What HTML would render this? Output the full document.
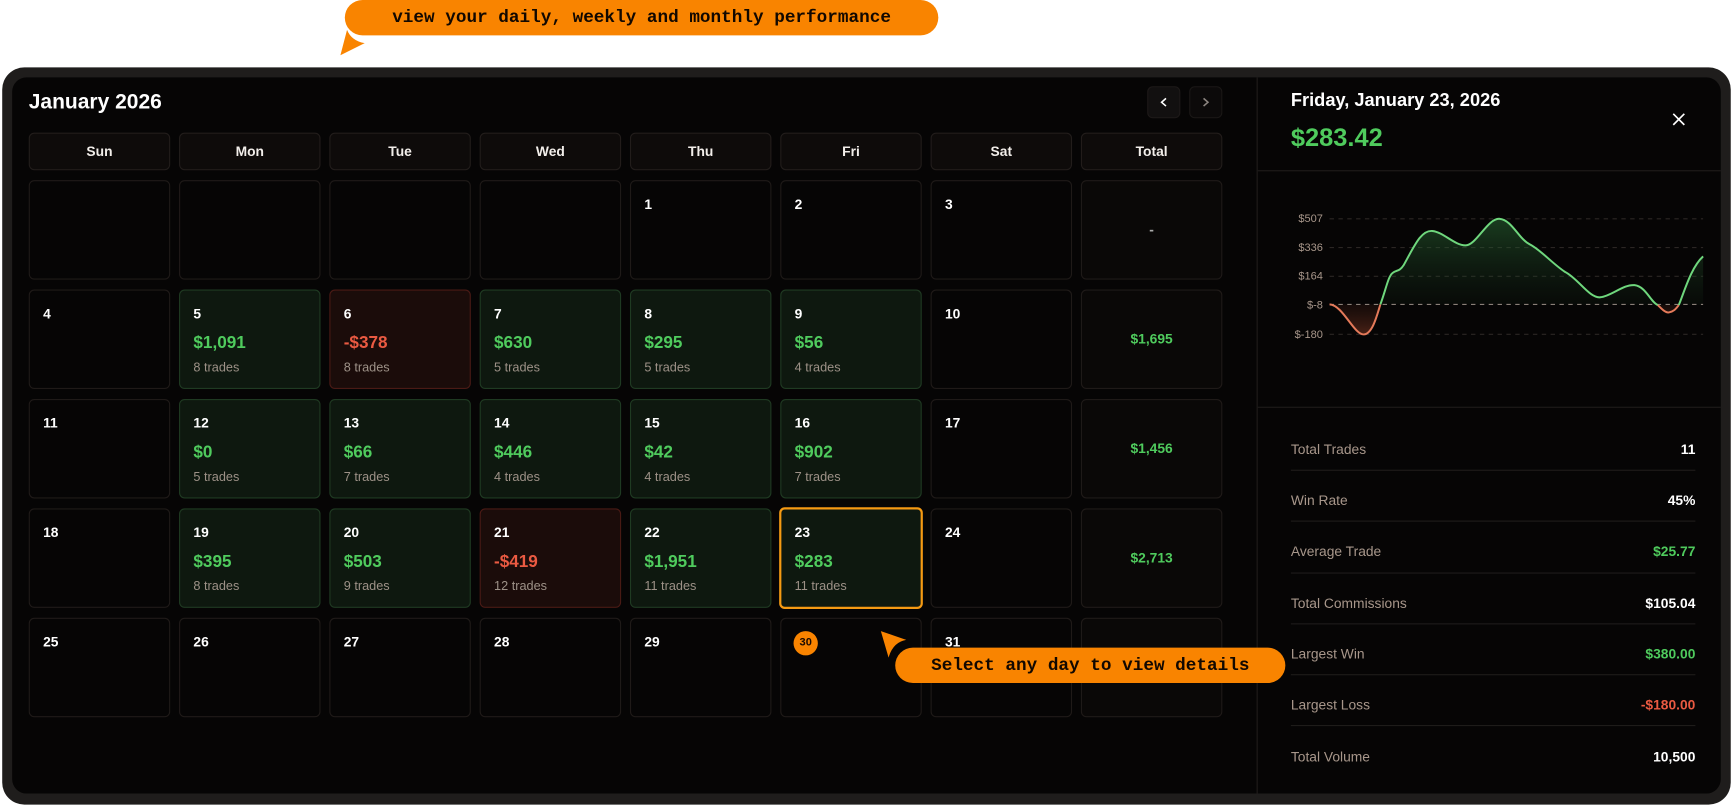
<!DOCTYPE html>
<html><head><meta charset="utf-8"><style>
*{margin:0;padding:0;box-sizing:border-box}
html,body{width:1733px;height:807px;overflow:hidden;background:#fff;font-family:"Liberation Sans",sans-serif}
#w{position:absolute;left:0;top:0;width:1568px;height:730px;transform:scale(1.1052);transform-origin:0 0}
.a{position:absolute}
.frame{left:2px;top:61px;width:1564px;height:667px;background:#1f1d1c;border-radius:20px}
.inner{left:11px;top:70px;width:1546px;height:648px;background:#060505;border-radius:13px;overflow:hidden}
.h{position:absolute;top:120px;width:128px;height:34px;background:#0e0b0a;border:1px solid #221d1b;border-radius:5px;color:#f2eeea;font-weight:bold;font-size:12.5px;text-align:center;line-height:32px}
.c{position:absolute;width:128px;height:90px;background:#060505;border:1px solid #1f1a18;border-radius:5px;color:#fff}
.c.g{background:#0e180f;border-color:#1f3a22}
.c.r{background:#1b0c0a;border-color:#4a1a15}
.c.sel{border:2px solid #f59a13;background:#0e180f}
.n{position:absolute;left:12px;top:14px;font-size:12.5px;font-weight:bold}
.m{position:absolute;left:12px;top:39px;font-size:15.5px;font-weight:bold;color:#4fcb5d}
.r .m{color:#ea5a42}
.t{position:absolute;left:12px;top:64px;font-size:11.5px;color:#9d9187}
.tot{text-align:center;line-height:88px;font-size:12.5px;font-weight:bold;color:#4fcb5d}
.lab{position:absolute;left:1168px;font-size:12.5px;color:#a8978b}
.val{position:absolute;right:34px;font-size:12.5px;font-weight:bold;color:#fff;text-align:right}
.ln{position:absolute;left:1168px;width:366px;height:1px;background:#1f1c1b}
.pill{background:#f98400;color:#120800;font-family:"Liberation Mono",monospace;font-weight:bold;border-radius:16px;text-align:center}
</style></head><body><div id="w">
<div class="a pill" style="left:312px;top:0;width:537px;height:32px;line-height:32px;font-size:16px">view your daily, weekly and monthly performance</div>
<svg class="a" style="left:300px;top:25px" width="40" height="30"><path d="M14 2 L8 25 L30 14 Q18 12 14 2Z" fill="#f98400"/></svg>
<div class="a frame"></div>
<div class="a inner"></div>
<div class="a" style="left:26px;top:82px;color:#fff;font-size:19px;font-weight:bold">January 2026</div>
<div class="a" style="left:1038px;top:78px;width:30px;height:29px;background:#121010;border:1px solid #1d1918;border-radius:5px"><svg width="28" height="27"><path d="M16 10 L12 13.5 L16 17" fill="none" stroke="#fff" stroke-width="1.4"/></svg></div>
<div class="a" style="left:1076px;top:78px;width:30px;height:29px;background:#0c0a0a;border:1px solid #1a1716;border-radius:5px"><svg width="28" height="27"><path d="M12 10 L16 13.5 L12 17" fill="none" stroke="#8c8580" stroke-width="1.4"/></svg></div>
<div class="h" style="left:26px">Sun</div><div class="h" style="left:162px">Mon</div><div class="h" style="left:298px">Tue</div><div class="h" style="left:434px">Wed</div><div class="h" style="left:570px">Thu</div><div class="h" style="left:706px">Fri</div><div class="h" style="left:842px">Sat</div><div class="h" style="left:978px">Total</div>

<div class="c" style="left:26px;top:163px"></div><div class="c" style="left:162px;top:163px"></div><div class="c" style="left:298px;top:163px"></div><div class="c" style="left:434px;top:163px"></div>
<div class="c" style="left:570px;top:163px"><span class="n">1</span></div>
<div class="c" style="left:706px;top:163px"><span class="n">2</span></div>
<div class="c" style="left:842px;top:163px"><span class="n">3</span></div>
<div class="c tot" style="left:978px;top:163px;background:#0a0807;color:#aaa">-</div>

<div class="c" style="left:26px;top:262px"><span class="n">4</span></div>
<div class="c g" style="left:162px;top:262px"><span class="n">5</span><span class="m">$1,091</span><span class="t">8 trades</span></div>
<div class="c r" style="left:298px;top:262px"><span class="n">6</span><span class="m">-$378</span><span class="t">8 trades</span></div>
<div class="c g" style="left:434px;top:262px"><span class="n">7</span><span class="m">$630</span><span class="t">5 trades</span></div>
<div class="c g" style="left:570px;top:262px"><span class="n">8</span><span class="m">$295</span><span class="t">5 trades</span></div>
<div class="c g" style="left:706px;top:262px"><span class="n">9</span><span class="m">$56</span><span class="t">4 trades</span></div>
<div class="c" style="left:842px;top:262px"><span class="n">10</span></div>
<div class="c tot" style="left:978px;top:262px;background:#0a0807">$1,695</div>

<div class="c" style="left:26px;top:361px"><span class="n">11</span></div>
<div class="c g" style="left:162px;top:361px"><span class="n">12</span><span class="m">$0</span><span class="t">5 trades</span></div>
<div class="c g" style="left:298px;top:361px"><span class="n">13</span><span class="m">$66</span><span class="t">7 trades</span></div>
<div class="c g" style="left:434px;top:361px"><span class="n">14</span><span class="m">$446</span><span class="t">4 trades</span></div>
<div class="c g" style="left:570px;top:361px"><span class="n">15</span><span class="m">$42</span><span class="t">4 trades</span></div>
<div class="c g" style="left:706px;top:361px"><span class="n">16</span><span class="m">$902</span><span class="t">7 trades</span></div>
<div class="c" style="left:842px;top:361px"><span class="n">17</span></div>
<div class="c tot" style="left:978px;top:361px;background:#0a0807">$1,456</div>

<div class="c" style="left:26px;top:460px"><span class="n">18</span></div>
<div class="c g" style="left:162px;top:460px"><span class="n">19</span><span class="m">$395</span><span class="t">8 trades</span></div>
<div class="c g" style="left:298px;top:460px"><span class="n">20</span><span class="m">$503</span><span class="t">9 trades</span></div>
<div class="c r" style="left:434px;top:460px"><span class="n">21</span><span class="m">-$419</span><span class="t">12 trades</span></div>
<div class="c g" style="left:570px;top:460px"><span class="n">22</span><span class="m">$1,951</span><span class="t">11 trades</span></div>
<div class="c sel" style="left:705px;top:459px;width:130px;height:92px"><span class="n" style="left:12px">23</span><span class="m">$283</span><span class="t">11 trades</span></div>
<div class="c" style="left:842px;top:460px"><span class="n">24</span></div>
<div class="c tot" style="left:978px;top:460px;background:#0a0807">$2,713</div>

<div class="c" style="left:26px;top:559px"><span class="n">25</span></div>
<div class="c" style="left:162px;top:559px"><span class="n">26</span></div>
<div class="c" style="left:298px;top:559px"><span class="n">27</span></div>
<div class="c" style="left:434px;top:559px"><span class="n">28</span></div>
<div class="c" style="left:570px;top:559px"><span class="n">29</span></div>
<div class="c" style="left:706px;top:559px"><span class="a" style="left:11px;top:11px;width:22px;height:22px;border-radius:11px;background:#f98400;color:#1a0a00;font-size:10px;font-weight:bold;text-align:center;line-height:22px">30</span></div>
<div class="c" style="left:842px;top:559px"><span class="n">31</span></div>
<div class="c" style="left:978px;top:559px;background:#0a0807"></div>

<div class="a" style="left:1137px;top:70px;width:1px;height:648px;background:#1f1c1b"></div>
<div class="a" style="left:1138px;top:154px;width:419px;height:1px;background:#1f1c1b"></div>
<div class="a" style="left:1138px;top:368px;width:419px;height:1px;background:#1f1c1b"></div>

<svg class="a" style="left:790px;top:565px" width="40" height="40"><path d="M7 6 L14 30 Q18 16 30 14Z" fill="#f98400"/></svg>
<div class="a pill" style="left:810px;top:586px;width:353px;height:32px;line-height:32px;font-size:16px">Select any day to view details</div>

<div class="a" style="left:1168px;top:82px;color:#fff;font-size:16.5px;font-weight:bold">Friday, January 23, 2026</div>
<div class="a" style="left:1168px;top:111px;color:#4fcb5d;font-size:23px;font-weight:bold">$283.42</div>
<svg class="a" style="left:1512px;top:101px" width="14" height="14"><path d="M2 2 L12 12 M12 2 L2 12" stroke="#fff" stroke-width="1.5"/></svg>

<svg class="a" style="left:1140px;top:180px" width="417" height="140" viewBox="1140 180 417 140">
<defs>
<linearGradient id="gg" x1="0" y1="198" x2="0" y2="276" gradientUnits="userSpaceOnUse"><stop offset="0" stop-color="#2a6a35" stop-opacity=".55"/><stop offset="1" stop-color="#1a3a20" stop-opacity=".1"/></linearGradient>
<linearGradient id="rg" x1="0" y1="276" x2="0" y2="303" gradientUnits="userSpaceOnUse"><stop offset="0" stop-color="#3a1a12" stop-opacity=".3"/><stop offset="1" stop-color="#7a3522" stop-opacity=".6"/></linearGradient>
</defs>
<g font-family="Liberation Sans,sans-serif" font-size="10" fill="#a8978b" text-anchor="end">
<text x="1197" y="201">$507</text><text x="1197" y="227">$336</text><text x="1197" y="253">$164</text><text x="1197" y="279">$-8</text><text x="1197" y="306">$-180</text></g>
<g stroke="#2b2624" stroke-dasharray="4 4" stroke-width="1">
<line x1="1203" y1="198" x2="1541" y2="198"/><line x1="1203" y1="224" x2="1541" y2="224"/><line x1="1203" y1="250" x2="1541" y2="250"/><line x1="1203" y1="302.5" x2="1541" y2="302.5"/></g>
<path d="M1249 275.4 C1254 262 1256 250 1260 247 C1264 244 1266 246 1270 240 C1280 222 1286 208 1296 209 C1306 210 1316 222 1326 222 C1336 222 1346 197 1357 198 C1368 199 1374 216 1384 221 C1394 226 1404 238 1416 246 C1428 252 1438 270 1448 269 C1458 268 1469 257 1479 258 C1489 259 1494 274 1500 276 L1500 276 Z" fill="url(#gg)"/>
<path d="M1519 276 C1524 264 1530 242 1541 232 L1541 276 Z" fill="url(#gg)"/>
<path d="M1203 275.4 C1215 276 1225 303 1234 302.6 C1242 302 1246 285 1249 275.4 Z" fill="url(#rg)"/>
<path d="M1500 276 C1504 280 1507 283 1510 282.7 C1514 282 1516 280 1519 276Z" fill="url(#rg)"/>
<line x1="1203" y1="275.5" x2="1541" y2="275.5" stroke="#8a7f78" stroke-dasharray="4 4"/>
<path d="M1203 275.4 C1215 276 1225 303 1234 302.6 C1242 302 1246 285 1249 275.4" fill="none" stroke="#e57a5a" stroke-width="1.8"/>
<path d="M1249 275.4 C1254 262 1256 250 1260 247 C1264 244 1266 246 1270 240 C1280 222 1286 208 1296 209 C1306 210 1316 222 1326 222 C1336 222 1346 197 1357 198 C1368 199 1374 216 1384 221 C1394 226 1404 238 1416 246 C1428 252 1438 270 1448 269 C1458 268 1469 257 1479 258 C1489 259 1494 274 1500 276" fill="none" stroke="#6fd77d" stroke-width="1.8"/>
<path d="M1500 276 C1504 280 1507 283 1510 282.7 C1514 282 1516 280 1519 276" fill="none" stroke="#e57a5a" stroke-width="1.8"/>
<path d="M1519 276 C1524 264 1530 242 1541 232" fill="none" stroke="#6fd77d" stroke-width="1.8"/>
</svg>

<div class="lab" style="top:400px">Total Trades</div><div class="val" style="top:400px">11</div><div class="ln" style="top:425px"></div>
<div class="lab" style="top:446px">Win Rate</div><div class="val" style="top:446px">45%</div><div class="ln" style="top:471px"></div>
<div class="lab" style="top:492px">Average Trade</div><div class="val" style="top:492px;color:#4fcb5d">$25.77</div><div class="ln" style="top:518px"></div>
<div class="lab" style="top:539px">Total Commissions</div><div class="val" style="top:539px">$105.04</div><div class="ln" style="top:564px"></div>
<div class="lab" style="top:585px">Largest Win</div><div class="val" style="top:585px;color:#4fcb5d">$380.00</div><div class="ln" style="top:610px"></div>
<div class="lab" style="top:631px">Largest Loss</div><div class="val" style="top:631px;color:#ea5a42">-$180.00</div><div class="ln" style="top:656px"></div>
<div class="lab" style="top:678px">Total Volume</div><div class="val" style="top:678px">10,500</div>
</div></body></html>
